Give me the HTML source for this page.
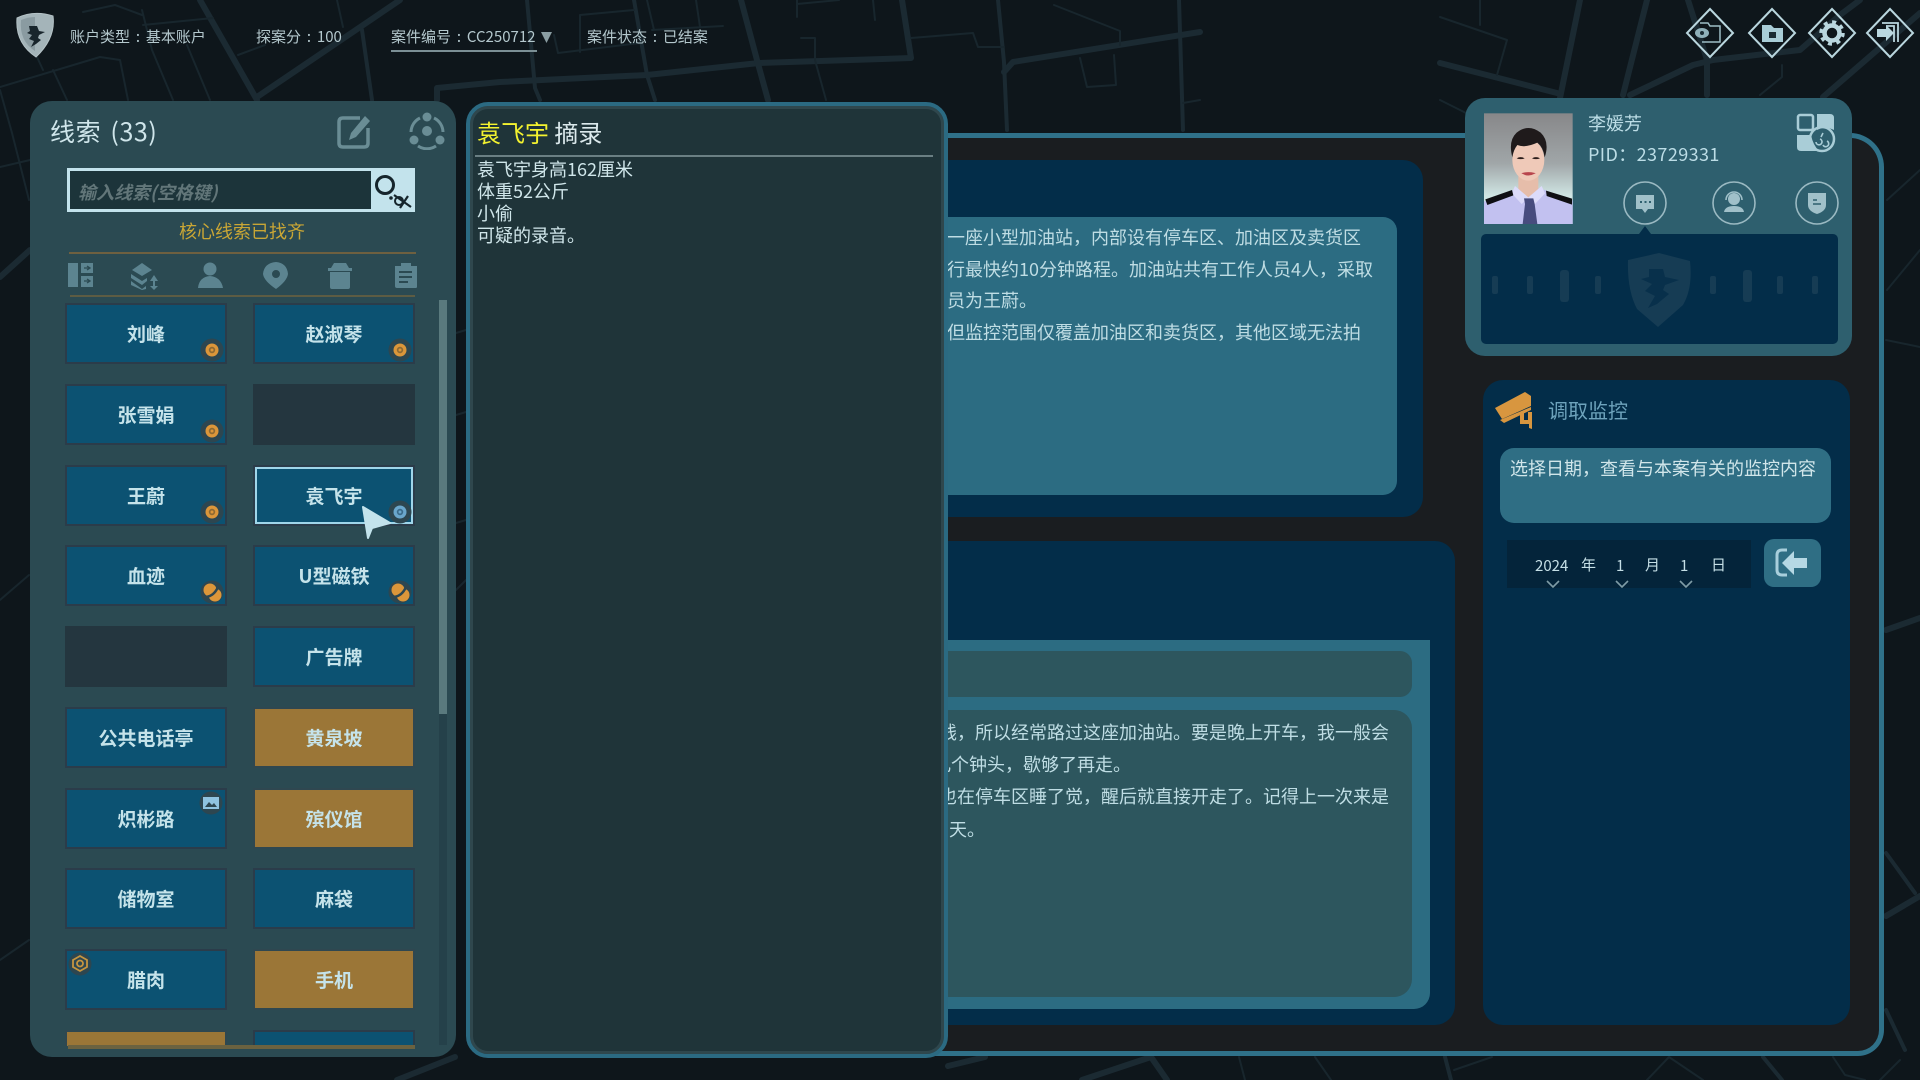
<!DOCTYPE html>
<html lang="zh"><head><meta charset="utf-8"><title>线索</title>
<style>
*{box-sizing:border-box;margin:0;padding:0}
html,body{width:1920px;height:1080px;overflow:hidden;background:#0e161b}
body{position:relative;font-family:"Noto Sans CJK SC","Liberation Sans",sans-serif;color:#c5e3ea}
.a{position:absolute}
.t{position:absolute;white-space:nowrap;line-height:1}
.hd{top:29px;font-size:15px;color:#b4c8cd;line-height:16px;word-spacing:2.5px}
.b{position:absolute;width:162px;height:61px;background:#0c5272;border:2px solid #2b3c4a;display:flex;align-items:center;justify-content:center;font-size:19px;font-weight:700;color:#c5e3ea}
.c1{left:65px}.c2{left:253px}
.g{background:#9b7637;border-color:#2f4750}
.e{background:#24363f;border-color:#24363f}
.b svg{position:absolute}
.l{position:absolute;font-size:18px;line-height:20px;color:#bfdde4;white-space:nowrap}
</style></head><body>

<svg width="0" height="0" style="position:absolute"><defs>
<symbol id="ro" viewBox="0 0 24 24"><circle cx="12" cy="12" r="11.5" fill="#2d4650"/><circle cx="12" cy="12" r="6.5" fill="#dc963a"/><circle cx="12" cy="12" r="3.2" fill="#8e6a33"/><circle cx="12" cy="12" r="1.5" fill="#dc963a"/></symbol>
<symbol id="rb" viewBox="0 0 24 24"><circle cx="12" cy="12" r="11.5" fill="#2d4650"/><circle cx="12" cy="12" r="6.500" fill="#6aa6cc"/><circle cx="12" cy="12" r="3.200" fill="#3a6a8a"/><circle cx="12" cy="12" r="1.500" fill="#6aa6cc"/></symbol>
<symbol id="rm" viewBox="0 0 24 24"><circle cx="12" cy="12" r="11.500" fill="#2d4650"/><circle cx="10" cy="10" r="6.500" fill="#dc963a"/><circle cx="15" cy="15" r="6.500" fill="#dc963a"/><path d="M6 17Q14 16 18 7" stroke="#2d4650" stroke-width="2.500" fill="none"/></symbol>
</defs></svg>

<!-- map background -->
<svg class="a" style="left:0;top:0" width="1920" height="1080" viewBox="0 0 1920 1080" fill="none" stroke="#1b2a32" stroke-linecap="round" stroke-linejoin="round">
<g stroke-width="6">
<path d="M400 0L257 97M200 0L257 100M437 100V88L500 82L647 75L759 63L911 58L902 0"/>
<path d="M741 0L757 60L768 100M1004 72L1013 62L1200 32"/>
<path d="M1580 0L1560 98M1647 0L1623 95M1688 0L1707 60V95M1440 63L1557 93M1630 95L1693 65L1713 60L1800 50L1840 15L1860 0M1823 97L1920 13"/>
<path d="M0 277L30 250M1886 630L1920 618M1886 916L1920 896M397 1080L455 1057M948 1066L985 1057M1082 1080L1151 1057L1167 1080"/>
</g>
<g stroke-width="4">
<path d="M362 30L372 100M527 0L535 88L540 100M634 0L647 75L655 100M998 0L1004 62L1007 130M1179 0L1183 130M1445 1057L1451 1080M1763 1057L1782 1080M1886 853L1915 893M1886 1010L1905 1050"/>
</g>
<g stroke-width="2" stroke="#18262d">
<path d="M83 12L115 5L142 15M0 87L100 57L120 60L128 100M37 57L43 70M53 70L67 100M142 10L152 50L173 100M143 25L213 18M187 45L210 100M238 55L265 45M337 0L343 27"/>
<path d="M580 15V52M580 15L634 10M554 35L558 53L640 43M647 0L654 30M696 0L700 27M652 30L723 26M797 0V17M797 4L839 0M873 0L875 20M911 38L973 33L978 47L1004 47M801 38H815V60L826 100M1054 5L1120 31V45M1080 58L1087 87L1116 85L1114 55M1183 103L1200 100"/>
<path d="M1440 17L1507 40L1497 75M1480 0V25M1782 65V77L1760 95M1440 100L1470 115M1887 200L1920 170M1887 290L1920 250M1886 340L1920 347M0 167L30 160M0 90L12 133L29 200M0 600L29 575M0 960L29 940"/>
<path d="M1239 1057L1245 1080M1315 1057L1331 1080M1454 1070L1492 1057M1647 1080L1669 1057L1703 1080M1833 1057L1845 1075L1865 1080M1900 1060L1880 1080M456 333L466 330M456 415L466 412M456 523L466 520M456 590L466 580"/>
</g>
</svg>

<!-- header -->
<svg class="a" style="left:14px;top:11px" width="42" height="48" viewBox="0 0 42 48">
<path d="M3 7Q20 -1 39 5Q42 27 22 46Q1 32 3 7Z" fill="#a4b4b9" stroke="#b4c2c6" stroke-width="1"/>
<path d="M7 9Q14 6 21 6V40Q5 30 7 9Z" fill="#8a9ba1"/>
<path d="M15 15H23L25 20L31 21L25 24L24 27L27 29L22 33L17 36L20 30L15 28L18 24L13 22L16 20Z" fill="#18252c"/>
</svg>
<div class="t hd" style="left:70px">账户类型 : 基本账户</div>
<div class="t hd" style="left:256px">探案分 : 100</div>
<div class="t hd" style="left:391px">案件编号 : CC250712</div>
<div class="a" style="left:391px;top:50px;width:146px;height:1.5px;background:#7b8f95"></div>
<svg class="a" style="left:541px;top:31px" width="12" height="13"><path d="M0 1H11L5.5 12Z" fill="#8a9da2"/></svg>
<div class="t hd" style="left:587px">案件状态 : 已结案</div>

<!-- top right icons -->
<svg class="a" style="left:1680px;top:5px" width="240" height="56" viewBox="0 0 240 56" fill="none" stroke="#b9d6de">
<g stroke-width="2"><path d="M30 4L53 28L30 52L7 28Z"/><path d="M92 4L115 28L92 52L69 28Z"/><path d="M152 4L175 28L152 52L129 28Z"/><path d="M210 4L233 28L210 52L187 28Z"/></g>
<path d="M20 18H28L30 21H40V37H22" stroke-width="1.5" stroke="#9dbdc6"/><ellipse cx="22" cy="28" rx="7" ry="5" fill="#8fb0b9" stroke="none"/><circle cx="22" cy="28" r="2" fill="#1a2b33" stroke="none"/>
<path d="M82 20H91L94 23H103V37H82Z" fill="#a9cdd7" stroke="none"/><rect x="89" y="27" width="7" height="6" fill="#1a2b33" stroke="none"/>
<circle cx="152" cy="28" r="7.500" stroke-width="4.500"/><circle cx="152" cy="28" r="11" stroke-width="3.500" stroke-dasharray="4 4.6"/>
<path d="M202 18H218V37M206 21H214V37" stroke-width="1.800"/><path d="M197 24H206V20L214 28L206 36V32H197Z" fill="#b9d6de" stroke="none"/>
</svg>

<!-- main panel -->
<div class="a" style="left:920px;top:133px;width:964px;height:923px;background:#1a1d20;border:5px solid #2f7189;border-left:0;border-radius:0 34px 26px 0"></div>
<div class="a" style="left:920px;top:160px;width:503px;height:357px;background:#032d49;border-radius:0 20px 20px 0"></div>
<div class="a" style="left:920px;top:217px;width:477px;height:278px;background:#2c6c82;border-radius:0 14px 14px 0"></div>
<div class="l" style="left:947px;top:226.500px">一座小型加油站，内部设有停车区、加油区及卖货区</div>
<div class="l" style="left:947px;top:258.500px">行最快约10分钟路程。加油站共有工作人员4人，采取</div>
<div class="l" style="left:947px;top:290px">员为王蔚。</div>
<div class="l" style="left:947px;top:322px">但监控范围仅覆盖加油区和卖货区，其他区域无法拍</div>

<div class="a" style="left:920px;top:541px;width:535px;height:484px;background:#032d49;border-radius:0 20px 20px 0"></div>
<div class="a" style="left:920px;top:640px;width:510px;height:369px;background:#2c6c82;border-radius:0 0 16px 0"></div>
<div class="a" style="left:920px;top:651px;width:492px;height:46px;background:#2d565e;border-radius:0 12px 12px 0"></div>
<div class="a" style="left:920px;top:710px;width:492px;height:287px;background:#2d565e;border-radius:0 18px 18px 0"></div>
<div class="l" style="right:531px;top:722px">钱，所以经常路过这座加油站。要是晚上开车，我一般会</div>
<div class="l" style="right:789px;top:754px">几个钟头，歇够了再走。</div>
<div class="l" style="right:531px;top:786px">也在停车区睡了觉，醒后就直接开走了。记得上一次来是</div>
<div class="l" style="right:935px;top:819px">天。</div>

<!-- surveillance card -->
<div class="a" style="left:1483px;top:380px;width:367px;height:645px;background:#032d49;border-radius:20px"></div>
<svg class="a" style="left:1494px;top:390px" width="40" height="40" viewBox="0 0 40 40" fill="#d8963f"><path d="M1 18L31 2L37 6V16L8 29Z"/><path d="M6 30L37 17V20L10 33Z"/><path d="M26 22H30V30H34V22H38V39L35 38V34H26Z"/></svg>
<div class="t" style="left:1548px;top:400px;font-size:20px;color:#6ea3bc">调取监控</div>
<div class="a" style="left:1500px;top:448px;width:331px;height:75px;background:#2f6e84;border-radius:14px"></div>
<div class="t" style="left:1510px;top:459px;font-size:18px;color:#d1e6ea">选择日期，查看与本案有关的监控内容</div>
<div class="a" style="left:1507px;top:540px;width:244px;height:48px;background:#04243a"></div>
<div class="t" style="left:1535px;top:558px;font-size:15px;color:#c5dfe6">2024</div>
<div class="t" style="left:1581px;top:557px;font-size:15px;color:#c5dfe6">年</div>
<div class="t" style="left:1616px;top:558px;font-size:15px;color:#c5dfe6">1</div>
<div class="t" style="left:1645px;top:557px;font-size:15px;color:#c5dfe6">月</div>
<div class="t" style="left:1680px;top:558px;font-size:15px;color:#c5dfe6">1</div>
<div class="t" style="left:1711px;top:557px;font-size:15px;color:#c5dfe6">日</div>
<svg class="a" style="left:1540px;top:580px" width="160" height="10" fill="none" stroke="#7f9ca6" stroke-width="1.6"><path d="M7 1L13 7L19 1M76 1L82 7L88 1M140 1L146 7L152 1"/></svg>
<div class="a" style="left:1764px;top:539px;width:57px;height:48px;background:#2f6e84;border-radius:10px"></div>
<svg class="a" style="left:1774px;top:548px" width="36" height="30" viewBox="0 0 36 30" fill="none"><path d="M13 2H8Q3 2 3 7V22Q3 27 8 27H13" stroke="#a8cfdc" stroke-width="3"/><path d="M8 15L20 3V10H33V20H20V27Z" fill="#b5d8e4"/></svg>

<!-- profile card -->
<div class="a" style="left:1465px;top:98px;width:387px;height:258px;background:#2e5f6e;border-radius:20px"></div>
<svg class="a" style="left:1483px;top:112px" width="91" height="113" viewBox="0 0 91 113">
<defs><linearGradient id="pg" x1="0" y1="0" x2="0" y2="1"><stop offset="0" stop-color="#878789"/><stop offset=".45" stop-color="#a0a6a8"/><stop offset=".75" stop-color="#d0e6e4"/></linearGradient></defs>
<g transform="translate(-3,-2) scale(.33333)">
<rect x="12" y="10" width="266" height="332" fill="url(#pg)"/>
<path d="M12 342V275L100 240L145 225L195 240L278 272V342Z" fill="#c2c1f0"/>
<path d="M115 190H175V245L145 268L115 245Z" fill="#e6bdaa"/>
<path d="M105 228L145 262L185 228L195 250L165 282L145 265L125 282L95 250Z" fill="#dcdbfa"/>
<path d="M132 265H160L164 282L172 342H128L135 282Z" fill="#474c7e"/>
<path d="M16 268L96 240L100 256L22 285Z" fill="#0f0f13"/><path d="M198 242L276 266V284L200 258Z" fill="#0f0f13"/>
<ellipse cx="145" cy="150" rx="48" ry="62" fill="#efc9b8"/>
<path d="M97 142Q84 92 110 68Q145 40 182 68Q210 95 194 142Q190 112 172 98Q135 115 112 105Q100 120 97 142Z" fill="#1f1a1b"/>
<path d="M110 145Q122 138 134 145Q122 150 110 145ZM156 145Q168 138 180 145Q168 150 156 145Z" fill="#2a1c1a"/>
<path d="M128 190Q145 200 163 190Q145 186 128 190Z" fill="#b8454d" stroke="#b8454d" stroke-width="3"/>
</g>
</svg>
<div class="t" style="left:1588px;top:114px;font-size:18px;color:#bcdde6">李媛芳</div>
<div class="t" style="left:1588px;top:145px;font-size:18px;color:#bcdde6;letter-spacing:.4px">PID：23729331</div>
<svg class="a" style="left:1796px;top:113px" width="40" height="40" viewBox="0 0 40 40" fill="none"><rect x="2" y="2" width="15" height="15" rx="2" stroke="#a9cdd7" stroke-width="2.5"/><path d="M21 1H34Q38 1 38 5V17A18 18 0 0 0 21 17ZM1 22H15Q17 32 23 38H5Q1 38 1 34Z" fill="#a9cdd7"/><circle cx="26" cy="26" r="12" stroke="#a9cdd7" stroke-width="2.5"/><path d="M20 29A3 3 0 1 0 24 26M25 24L27 20M27 32A3 3 0 1 0 31 28" stroke="#a9cdd7" stroke-width="1.6"/></svg>
<svg class="a" style="left:1620px;top:178px" width="225" height="58" viewBox="0 0 225 58" fill="none" stroke="#9ab9c2" stroke-width="1.6">
<circle cx="25" cy="25" r="21"/><circle cx="114" cy="25" r="21"/><circle cx="197" cy="25" r="21"/>
<path d="M16 17H34V31H28L25 35L22 31H16Z" fill="#a0c0c9" stroke="none"/><path d="M20 24H22M24.500 24H26.500M29 24H31" stroke="#2e5f6e" stroke-width="2"/>
<circle cx="114" cy="21" r="6" fill="#a0c0c9" stroke="none"/><path d="M104 34Q105 28 114 28Q123 28 124 34Z" fill="#a0c0c9" stroke="none"/><path d="M106 22A8 8 0 0 1 122 22" stroke="#a0c0c9"/>
<path d="M188 15H206V27Q206 33 197 36Q188 33 188 27Z" fill="#a0c0c9" stroke="none"/><path d="M193 22H197M193 26H201" stroke="#2e5f6e" stroke-width="1.500"/>
<path d="M19 56L25 48L31 56Z" fill="#032d49" stroke="none"/>
</svg>
<div class="a" style="left:1481px;top:234px;width:357px;height:110px;background:#032d49;border-radius:5px"></div>
<svg class="a" style="left:1481px;top:234px" width="357" height="110" fill="#163c54">
<rect x="11" y="42" width="6" height="18" rx="2"/><rect x="46" y="42" width="6" height="18" rx="2"/><rect x="79" y="36" width="9" height="32" rx="3"/><rect x="114" y="42" width="6" height="18" rx="2"/><rect x="229" y="42" width="6" height="18" rx="2"/><rect x="262" y="36" width="9" height="32" rx="3"/><rect x="296" y="42" width="6" height="18" rx="2"/><rect x="331" y="42" width="6" height="18" rx="2"/>
<path d="M147 26L178 19L209 27Q212 54 202 71L177 93L156 75Q146 56 147 26Z"/><path d="M168 35H182L184 43L198 46L184 51L182 56L188 60L176 70L167 74L174 62L164 57L171 50L160 45L168 43Z" fill="#08304b"/>
</svg>

<!-- left clue panel -->
<div class="a" style="left:30px;top:101px;width:426px;height:956px;background:#2b4a52;border-radius:22px"></div>
<div class="t" style="left:50px;top:118px;font-size:25px;color:#cfe5ea;line-height:27px;letter-spacing:.6px;word-spacing:3px">线索 (33)</div>
<svg class="a" style="left:336px;top:114px" width="36" height="36" viewBox="0 0 36 36" fill="none"><path d="M24 4H7Q3 4 3 8V29Q3 33 7 33H28Q32 33 32 29V14" stroke="#6a8d95" stroke-width="3.5"/><path d="M29 2L34 7L20 23L13 26L15 19Z" fill="#6a8d95"/></svg>
<svg class="a" style="left:408px;top:112px" width="38" height="38" viewBox="0 0 38 38" fill="none" stroke="#6a8d95"><circle cx="19" cy="5" r="4.500" fill="#6a8d95" stroke="none"/><circle cx="6" cy="28" r="4.500" fill="#6a8d95" stroke="none"/><circle cx="32" cy="28" r="4.500" fill="#6a8d95" stroke="none"/><circle cx="19" cy="19" r="5" fill="#6a8d95" stroke="none"/><path d="M12 6A16 16 0 0 0 3 20M26 6A16 16 0 0 1 35 20M10 34A16 16 0 0 0 28 34" stroke-width="3"/></svg>
<div class="a" style="left:67px;top:168px;width:348px;height:44px;background:#1c343a;border:3px solid #c3e3ec"></div>
<div class="a" style="left:371px;top:168px;width:44px;height:44px;background:#c3e3ec"></div>
<svg class="a" style="left:373px;top:170px" width="40" height="40" viewBox="0 0 40 40" fill="none" stroke="#16252c" stroke-width="3"><circle cx="12" cy="15" r="8.500"/><circle cx="18" cy="28" r="1.800" fill="#16252c" stroke="none"/><circle cx="26" cy="31" r="4" stroke-width="2"/><path d="M21 25L38 37M35 26L27 38" stroke-width="2.200"/></svg>
<div class="t" style="left:78px;top:183px;font-size:18px;font-style:italic;font-weight:700;color:#627679">输入线索(空格键)</div>
<div class="t" style="left:179px;top:222px;font-size:18px;color:#c9a635">核心线索已找齐</div>
<div class="a" style="left:69px;top:252px;width:347px;height:2px;background:#6e6040"></div>
<div class="a" style="left:70px;top:295px;width:345px;height:2px;background:#5d5c43"></div>
<svg class="a" style="left:66px;top:260px" width="355" height="30" viewBox="0 0 355 30" fill="#5c8490">
<path d="M2 3H12V27H2ZM15 3H27V13H15ZM15 16H27V27H15Z"/><path d="M18 8H23M21 6L24 8L21 10M18 21H23M21 19L24 21L21 23" stroke="#2b4a52" fill="none" stroke-width="1.300"/>
<path d="M66 10L76 3L86 10L76 16ZM65 14L76 21L81 18V21L76 25L65 18ZM65 21L76 29L80 26V29L76 30L65 25ZM88 15L92 21H89V26H92L88 30L84 26H87V21H84Z"/>
<circle cx="144" cy="9" r="6.500"/><path d="M132 28Q133 17 144 16Q155 17 157 28Z"/>
<path d="M210 2Q221 3 222 14Q221 21 210 29Q198 21 197 14Q198 3 210 2ZM210 10A4 4 0 1 0 210 18A4 4 0 1 0 210 10Z" fill-rule="evenodd"/>
<path d="M268 3H280L283 8H286V11H262V8H265ZM264 12H284V27Q284 29 282 29H266Q264 29 264 27Z"/>
<path d="M329 6H335V3H345V6H351V27Q351 28 349 28H331Q329 28 329 26ZM333 11V13H346V11ZM333 16V18H346V16ZM333 21V23H342V21Z" fill-rule="evenodd"/>
</svg>

<!-- clue buttons -->
<div class="b c1" style="top:303px">刘峰<svg style="right:1px;bottom:0" width="24" height="24"><use href="#ro"/></svg></div>
<div class="b c2" style="top:303px">赵淑琴<svg style="right:1px;bottom:0" width="24" height="24"><use href="#ro"/></svg></div>
<div class="b c1" style="top:384px">张雪娟<svg style="right:1px;bottom:0" width="24" height="24"><use href="#ro"/></svg></div>
<div class="b c2 e" style="top:384px"></div>
<div class="b c1" style="top:465px">王蔚<svg style="right:1px;bottom:0" width="24" height="24"><use href="#ro"/></svg></div>
<div class="b c2" style="top:465px;box-shadow:inset 0 0 0 2px #9fd6ea">袁飞宇<svg style="right:1px;bottom:0" width="24" height="24"><use href="#rb"/></svg></div>
<div class="b c1" style="top:545px">血迹<svg style="right:1px;bottom:0" width="24" height="24"><use href="#rm"/></svg></div>
<div class="b c2" style="top:545px">U型磁铁<svg style="right:1px;bottom:0" width="24" height="24"><use href="#rm"/></svg></div>
<div class="b c1 e" style="top:626px"></div>
<div class="b c2" style="top:626px">广告牌</div>
<div class="b c1" style="top:707px">公共电话亭</div>
<div class="b c2 g" style="top:707px">黄泉坡</div>
<div class="b c1" style="top:788px">炽彬路<svg style="right:2px;top:1px" width="24" height="24"><circle cx="12" cy="12" r="11.500" fill="#2d4650"/><rect x="4" y="6" width="16" height="12" fill="#8fc3e0"/><path d="M6 16L10 11L13 14L15 12L18 16Z" fill="#2d4650"/></svg></div>
<div class="b c2 g" style="top:788px">殡仪馆</div>
<div class="b c1" style="top:868px">储物室</div>
<div class="b c2" style="top:868px">麻袋</div>
<div class="b c1" style="top:949px">腊肉<svg style="left:1px;top:1px" width="24" height="24" fill="none" stroke="#c59540"><circle cx="12" cy="12" r="11.500" fill="#2d4650" stroke="none"/><path d="M12 4L19 8V15L12 19L5 15V8Z" stroke-width="1.800"/><circle cx="12" cy="11.500" r="3" stroke-width="1.800"/></svg></div>
<div class="b c2 g" style="top:949px">手机</div>
<div class="b c1 g" style="top:1030px;height:16px;border-bottom:0"></div>
<div class="b c2" style="top:1030px;height:16px;border-bottom:0"></div>
<div class="a" style="left:68px;top:1045px;width:347px;height:4px;background:#6b6240"></div>
<div class="a" style="left:439px;top:300px;width:8px;height:745px;background:#25414a"></div>
<div class="a" style="left:439px;top:300px;width:8px;height:414px;background:#5a7a7e"></div>
<svg class="a" style="left:360px;top:504px" width="34" height="38"><path d="M3 3L30 19L12 24L8 34Z" fill="#c3e3ec" stroke="#c3e3ec" stroke-width="2" stroke-linejoin="round"/></svg>

<!-- summary panel -->
<div class="a" style="left:466px;top:102px;width:482px;height:956px;background:#1f3439;border:4px solid #2b6a82;border-radius:22px;box-shadow:inset 0 0 0 3px #2f474d"></div>
<div class="t" style="left:477px;top:119px;font-size:24px;color:#dbe9ec;line-height:26px"><span style="color:#f4f32f">袁飞宇</span> 摘录</div>
<div class="a" style="left:475px;top:155px;width:458px;height:2px;background:#6a7f83"></div>
<div class="l" style="left:477px;top:158px;line-height:22px;color:#d0e6ea">袁飞宇身高162厘米<br>体重52公斤<br>小偷<br>可疑的录音。</div>
</body></html>
